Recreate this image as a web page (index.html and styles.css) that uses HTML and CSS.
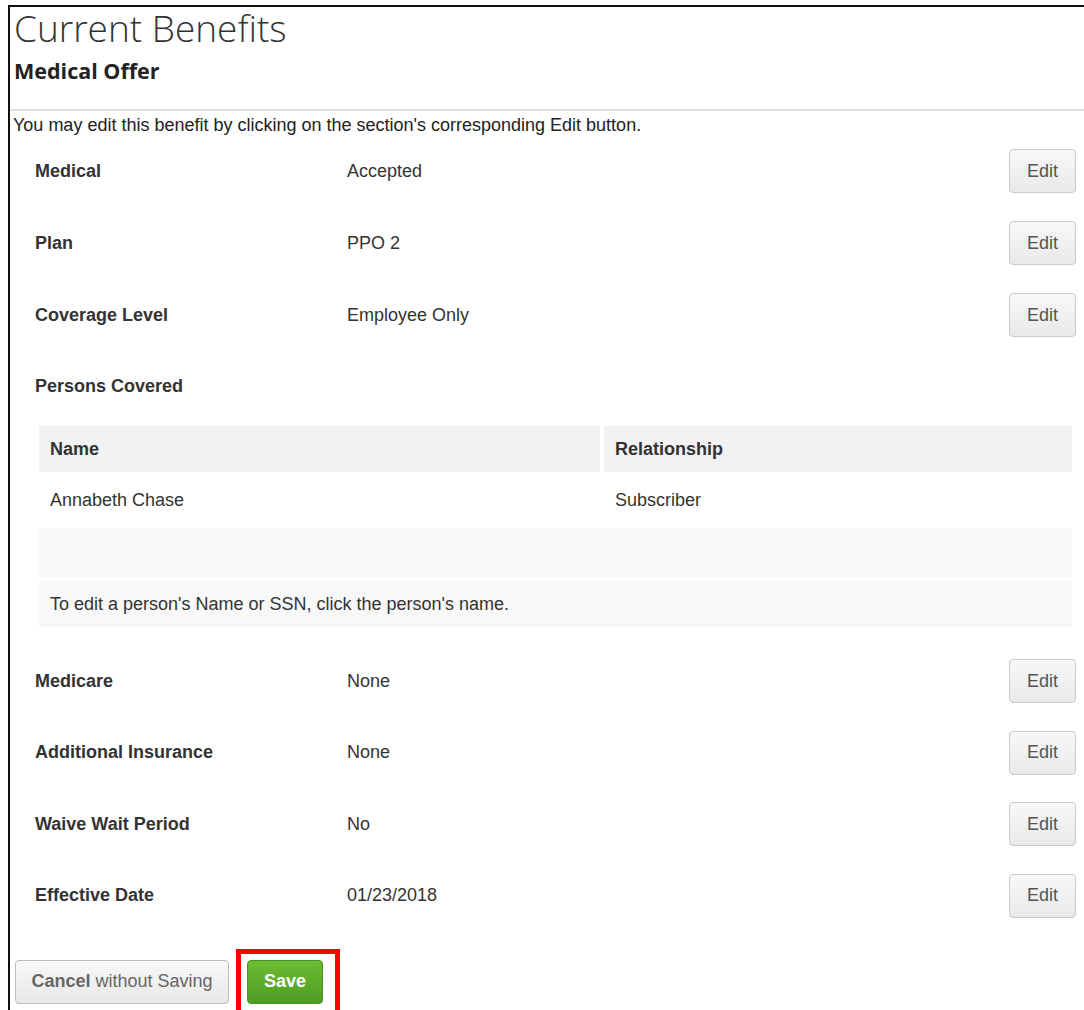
FILE: index.html
```html
<!DOCTYPE html>
<html lang="en">
<head>
<meta charset="utf-8">
<title>Current Benefits</title>
<link rel="stylesheet" href="styles.css">
</head>
<body>
<div class="page">
  <header class="page-head">
    <h1 class="title">Current Benefits</h1>
    <h2 class="subtitle">Medical Offer</h2>
  </header>
  <p class="intro">You may edit this benefit by clicking on the section's corresponding Edit button.</p>

  <section class="benefit">
    <div class="row">
      <div class="label">Medical</div>
      <div class="value">Accepted</div>
      <button class="btn-edit" type="button">Edit</button>
    </div>
    <div class="row">
      <div class="label">Plan</div>
      <div class="value">PPO 2</div>
      <button class="btn-edit" type="button">Edit</button>
    </div>
    <div class="row">
      <div class="label">Coverage Level</div>
      <div class="value">Employee Only</div>
      <button class="btn-edit" type="button">Edit</button>
    </div>
    <div class="row row-plain">
      <div class="label">Persons Covered</div>
    </div>

    <table class="persons">
      <colgroup>
        <col class="col-name">
        <col>
      </colgroup>
      <thead>
        <tr class="tr-head">
          <th>Name</th>
          <th>Relationship</th>
        </tr>
      </thead>
      <tbody>
        <tr class="tr-person">
          <td>Annabeth Chase</td>
          <td>Subscriber</td>
        </tr>
        <tr class="tr-empty">
          <td colspan="2"></td>
        </tr>
        <tr class="tr-note">
          <td colspan="2">To edit a person's Name or SSN, click the person's name.</td>
        </tr>
      </tbody>
    </table>

    <div class="row row-after">
      <div class="label">Medicare</div>
      <div class="value">None</div>
      <button class="btn-edit" type="button">Edit</button>
    </div>
    <div class="row">
      <div class="label">Additional Insurance</div>
      <div class="value">None</div>
      <button class="btn-edit" type="button">Edit</button>
    </div>
    <div class="row">
      <div class="label">Waive Wait Period</div>
      <div class="value">No</div>
      <button class="btn-edit" type="button">Edit</button>
    </div>
    <div class="row">
      <div class="label">Effective Date</div>
      <div class="value">01/23/2018</div>
      <button class="btn-edit" type="button">Edit</button>
    </div>
  </section>

  <div class="actions">
    <button class="btn-cancel" type="button"><b>Cancel</b> without Saving</button>
    <span class="highlight">
      <button class="btn-save" type="button">Save</button>
    </span>
  </div>
</div>
</body>
</html>
```

FILE: styles.css
```css
html, body {
  background: #fff;
}

body {
  margin: 5px 0 0 8px;
  font-family: "Liberation Sans", Arial, sans-serif;
  color: #333;
  overflow: hidden;
}

.page {
  border-top: 2px solid #111;
  border-left: 2px solid #111;
  min-height: 1100px;
}

.page-head {
  padding: 1px 0 0 4px;
  border-bottom: 2px solid #ddd;
  height: 104px;
  box-sizing: border-box;
}

.title {
  margin: 0;
  font-family: "Open Sans", "Segoe UI", sans-serif;
  font-weight: 300;
  font-size: 37px;
  line-height: 40px;
  color: #333;
}

.subtitle {
  margin: 10px 0 0;
  font-family: "Open Sans", "Segoe UI", sans-serif;
  font-weight: 700;
  font-size: 21.5px;
  line-height: 26px;
  color: #222;
}

.intro {
  margin: 0;
  padding: 4px 0 0 3px;
  font-size: 18px;
  line-height: 20px;
  color: #222;
}

.benefit {
  padding: 0 8px 0 25px;
}

.row {
  display: flex;
  align-items: center;
  height: 72px;
  font-size: 18px;
}

.row-plain {
  height: 71px;
}

.row-after {
  margin-top: 14px;
}

.row-after ~ .row {
  height: 71.5px;
}

.label {
  width: 312px;
  font-weight: 700;
  color: #333;
}

.value {
  flex: 1;
  color: #333;
}

.btn-edit {
  width: 67px;
  height: 44px;
  padding: 0;
  font-family: "Liberation Sans", Arial, sans-serif;
  font-size: 18px;
  color: #555;
  background: linear-gradient(#f8f8f8, #e9e9e9);
  border: 1px solid #c9c9c9;
  border-radius: 4px;
}

.persons {
  width: 100%;
  border-collapse: separate;
  border-spacing: 4px;
  margin: 0;
  font-size: 18px;
  color: #333;
}

.col-name {
  width: 561px;
}

.persons th,
.persons td {
  padding: 0 11px;
  text-align: left;
}

.tr-head th {
  height: 46px;
  background: #f2f2f2;
  font-weight: 700;
}

.tr-person td {
  height: 48px;
  background: #fff;
}

.tr-empty td {
  height: 49px;
  background: #f8f8f8;
}

.tr-note td {
  height: 46px;
  background: #f8f8f8;
}

.actions {
  display: flex;
  align-items: flex-start;
  gap: 18px;
  padding: 28px 0 0 5px;
}

.btn-cancel {
  width: 214px;
  height: 44px;
  padding: 0;
  font-family: "Liberation Sans", Arial, sans-serif;
  font-size: 18px;
  color: #666;
  background: linear-gradient(#f8f8f8, #e8e8e8);
  border: 1px solid #bdbdbd;
  border-radius: 4px;
}

.btn-cancel b {
  color: #666;
}

.highlight {
  position: relative;
  display: inline-block;
}

.highlight::after {
  content: "";
  position: absolute;
  left: -11px;
  top: -11px;
  right: -17px;
  bottom: -20px;
  border: 5px solid #ff0000;
}

.btn-save {
  width: 76px;
  height: 44px;
  padding: 0;
  font-family: "Liberation Sans", Arial, sans-serif;
  font-size: 18px;
  font-weight: 700;
  color: #fff;
  background: linear-gradient(#6cbc33, #4d9d24);
  border: 1px solid #4b9025;
  border-radius: 4px;
}
```
